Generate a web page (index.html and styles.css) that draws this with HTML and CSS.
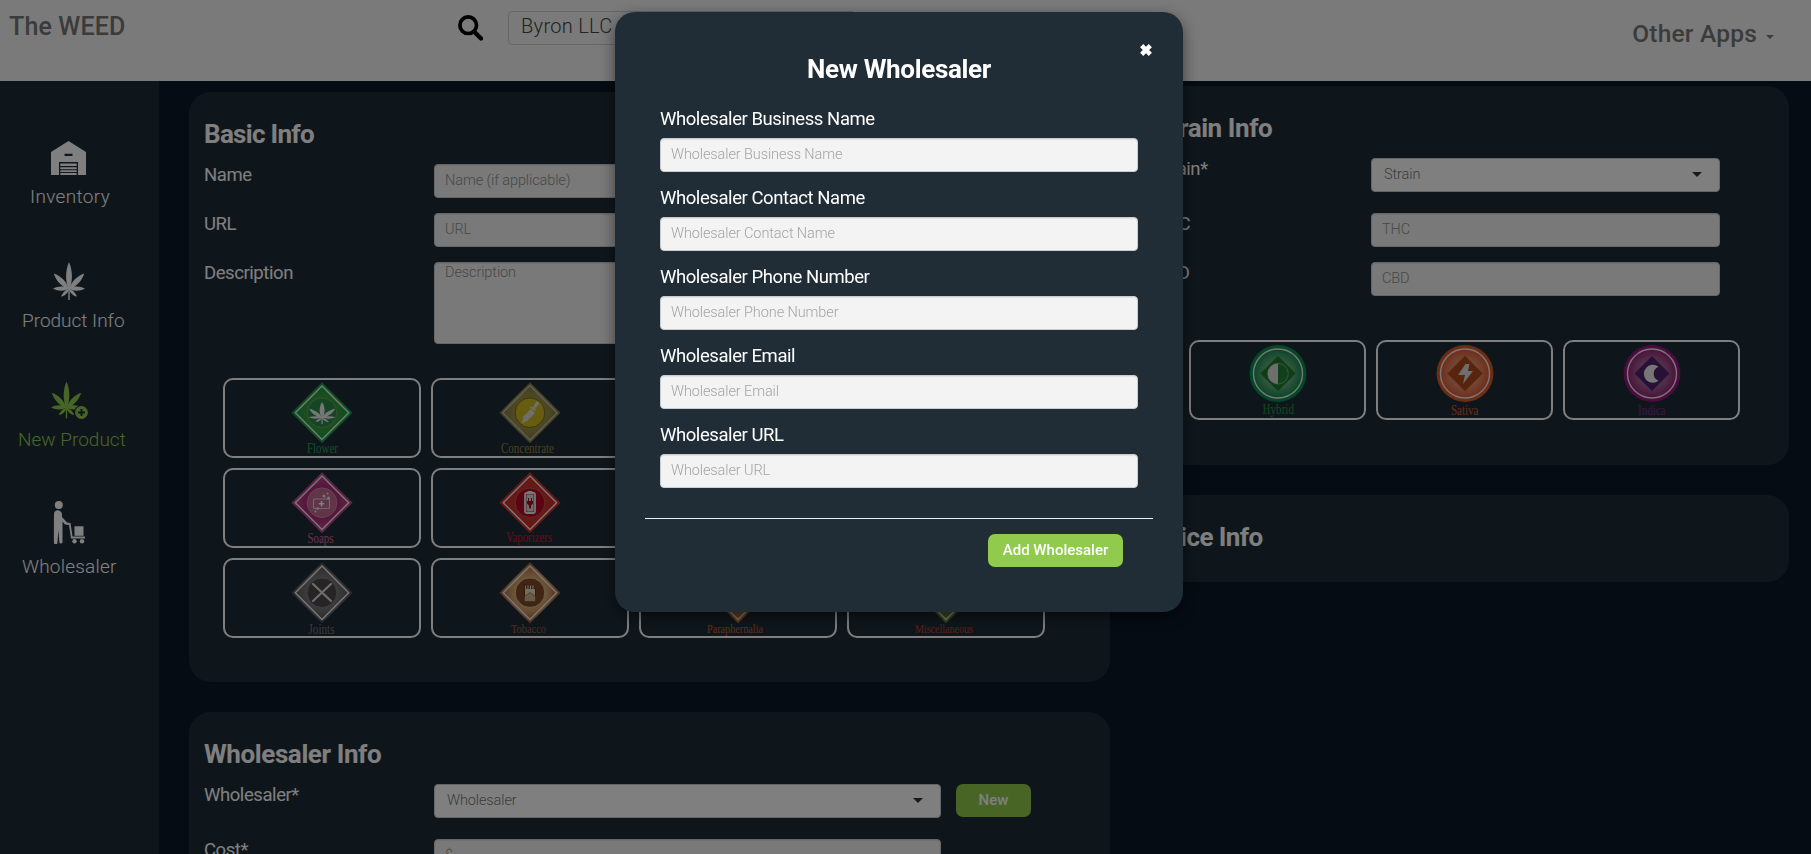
FILE: index.html
```html
<!DOCTYPE html>
<html lang="en">
<head>
<meta charset="utf-8">
<title>The WEED</title>
<link rel="stylesheet" href="styles.css">
</head>
<body>
<svg class="defs" width="0" height="0">
  <defs>
    <symbol id="leaf" viewBox="0 0 32 38">
      <path d="M16 28C12 20 12.300 8 16 0C19.700 8 20 20 16 28Z"/>
      <path d="M16 28C9 25 3 19 .8 11.600C8 14 14 20 16 28Z"/>
      <path d="M16 28C23 25 29 19 31.200 11.600C24 14 18 20 16 28Z"/>
      <path d="M16 26.500C11 23.500 5 24 0 26.500C5 29.500 12 29.500 16 26.500Z"/>
      <path d="M16 26.500C21 23.500 27 24 32 26.500C27 29.500 20 29.500 16 26.500Z"/>
      <path d="M16 27C12 28 9.500 31 8 34.500C12 34 15 31 16 27Z"/>
      <path d="M16 27C20 28 22.500 31 24 34.500C20 34 17 31 16 27Z"/>
      <path d="M15.300 26h1.400v12h-1.400z"/>
    </symbol>
    <radialGradient id="g-green"><stop offset=".3" stop-color="#4f9c30"/><stop offset="1" stop-color="#00a04c"/></radialGradient>
    <radialGradient id="g-olive"><stop offset=".3" stop-color="#a8a050"/><stop offset="1" stop-color="#82743a"/></radialGradient>
    <radialGradient id="g-pink"><stop offset=".3" stop-color="#a01c70"/><stop offset="1" stop-color="#c85090"/></radialGradient>
    <radialGradient id="g-red"><stop offset=".3" stop-color="#b84038"/><stop offset="1" stop-color="#e02420"/></radialGradient>
    <radialGradient id="g-gray"><stop offset=".2" stop-color="#909094"/><stop offset="1" stop-color="#505054"/></radialGradient>
    <radialGradient id="g-tan"><stop offset=".3" stop-color="#f0c88c"/><stop offset="1" stop-color="#a45c34"/></radialGradient>
    <radialGradient id="g-hybrid"><stop offset=".35" stop-color="#80b890"/><stop offset=".85" stop-color="#148c50"/><stop offset="1" stop-color="#00904c"/></radialGradient>
    <radialGradient id="g-sativa"><stop offset=".35" stop-color="#e8a080"/><stop offset=".85" stop-color="#e05c34"/><stop offset="1" stop-color="#e05820"/></radialGradient>
    <radialGradient id="g-indica"><stop offset=".35" stop-color="#a878a0"/><stop offset=".85" stop-color="#982478"/><stop offset="1" stop-color="#981080"/></radialGradient>
  </defs>
</svg>

<header class="topbar">
  <div class="brand">The WEED</div>
  <div class="search">
    <svg class="search-icon" viewBox="0 0 25 26"><circle cx="10.200" cy="10.200" r="8.300" fill="none" stroke="#000" stroke-width="3.700"/><path d="M16 16.500l7 7" stroke="#000" stroke-width="4.400" stroke-linecap="round"/></svg>
    <div class="search-box">Byron LLC</div>
  </div>
  <div class="apps"><span>Other Apps</span><i class="apps-caret"></i></div>
</header>

<div class="layout">
  <nav class="sidebar">
    <a class="nav-item nav-inventory">
      <svg width="35" height="34" viewBox="0 0 35 34"><path fill-rule="evenodd" d="M17.500 0L35 11V34H27V21H8V34H0V11ZM13.500 12.800V15h8v-2.200Z"/><path d="M9.300 22.500h16.400v2.600H9.300zM9.300 26.300h16.400v2H9.300zM9.300 29.300h16.400v1.600H9.300zM9.300 32h16.400v2H9.300z"/></svg>
      <span>Inventory</span>
    </a>
    <a class="nav-item nav-product">
      <svg width="32" height="38"><use href="#leaf"/></svg>
      <span>Product Info</span>
    </a>
    <a class="nav-item nav-new">
      <svg width="38" height="38" viewBox="0 0 38 38"><use href="#leaf" width="31" height="38"/><circle cx="30.500" cy="31.500" r="7.400" class="badge-ring"/><circle cx="30.500" cy="31.500" r="6.400"/><path d="M30.500 28v7M27 31.500h7" class="badge-plus"/></svg>
      <span>New Product</span>
    </a>
    <a class="nav-item nav-whole">
      <svg width="32" height="43" viewBox="0 0 32 43"><circle cx="5.800" cy="4" r="4"/><path d="M1 13c0-5 7-5 8 0v3l5 5.500 3.500.5 2 13.500H32v2H18L16 24l-4-.5-2.500-3V41.500a1.800 1.800 0 0 1-3.200 0L5.400 29 4.500 41.500a1.800 1.800 0 0 1-3.600 0V28Z"/><path d="M21.500 25.300h9v9.500h-9z"/><circle cx="21.500" cy="40.300" r="2.200"/><circle cx="29" cy="40.300" r="2.200"/></svg>
      <span>Wholesaler</span>
    </a>
  </nav>

  <main class="content">
    <div class="col col-left">
      <section class="panel basic">
        <h3 class="t-basic">Basic Info</h3>
        <div class="row"><label>Name</label><div class="field w-left">Name (if applicable)</div></div>
        <div class="row"><label>URL</label><div class="field w-left">URL</div></div>
        <div class="row row-area"><label>Description</label><div class="field area w-left">Description</div></div>
        <div class="tiles">
          <div class="tile"><svg viewBox="0 0 80 76"><path d="M40 2.200L70.500 32.700 40 63.200 9.500 32.700Z" fill="url(#g-green)"/><path d="M40 6L66.700 32.700 40 59.400 13.300 32.700Z" class="rim"/><circle cx="40" cy="32.700" r="14.800" fill="#2c8a48" stroke="#6aa070"/><use href="#leaf" width="32" height="38" transform="translate(26.500 22) scale(.85 .58)" fill="#eee"/><text x="25" y="73" textLength="31" lengthAdjust="spacingAndGlyphs" fill="#289a4c">Flower</text></svg></div>
          <div class="tile"><svg viewBox="0 0 80 76"><path d="M40 2.200L70.500 32.700 40 63.200 9.500 32.700Z" fill="url(#g-olive)"/><path d="M40 5.500L67.200 32.700 40 59.900 12.800 32.700Z" class="rim thin"/><circle cx="40" cy="32.700" r="14.800" fill="#cdbb20" stroke="#776b18"/><path d="M33.500 43c-2 1-2-2 0-3.500l-.5-2.500 8-8 4 4-8 8-2.500.5M40 27.500l1-1 2 1 3-5.500c2-1.500 4 1 2.500 3l-3.500 3 1 2-1 1Z" fill="#ddd"/><text x="11" y="73" textLength="53" lengthAdjust="spacingAndGlyphs" fill="#988232">Concentrate</text></svg></div>
          <div class="tile"></div>
          <div class="tile"></div>
          <div class="tile"><svg viewBox="0 0 80 76"><path d="M40 2.200L70.500 32.700 40 63.200 9.500 32.700Z" fill="url(#g-pink)"/><path d="M40 6L66.700 32.700 40 59.400 13.300 32.700Z" class="rim"/><circle cx="40" cy="32.700" r="14.800" fill="#c06a90" stroke="#d08aac"/><rect x="31.500" y="29" width="16" height="9.500" rx="1" fill="none" stroke="#eac8d8" stroke-width="1.200"/><path d="M39.500 31v5.500M36.800 33.700h5.500" stroke="#fff" stroke-width="1.500"/><g fill="#eee"><circle cx="42" cy="26" r="1.500"/><circle cx="45.500" cy="23.500" r="1"/><circle cx="46.500" cy="28" r="1.500"/><circle cx="35.500" cy="38.500" r="1.300"/><circle cx="33.500" cy="41.500" r="1"/></g><text x="25.500" y="73" textLength="26" lengthAdjust="spacingAndGlyphs" fill="#d0649c">Soaps</text></svg></div>
          <div class="tile"><svg viewBox="0 0 80 76"><path d="M40 2.200L70.500 32.700 40 63.200 9.500 32.700Z" fill="url(#g-red)"/><path d="M40 6L66.700 32.700 40 59.400 13.300 32.700Z" class="rim"/><circle cx="40" cy="32.700" r="14.800" fill="#b80824" stroke="#d05050"/><rect x="35" y="23" width="10" height="20" rx="1.500" fill="#a03040" stroke="#eee" stroke-width="1.800"/><path d="M37.500 22h5" stroke="#eee" stroke-width="2"/><rect x="36.500" y="24.500" width="7" height="17" fill="#ddd"/><path d="M37 31h6v2.500l-2 2v3h-2v-3l-2-2ZM38 28h1v3h-1zM41 28h1v3h-1z" fill="#a80820"/><text x="16" y="72.200" textLength="46" lengthAdjust="spacingAndGlyphs" fill="#cc1830">Vaporizers</text></svg></div>
          <div class="tile"></div>
          <div class="tile"></div>
          <div class="tile"><svg viewBox="0 0 80 76"><path d="M40 2.200L70.500 32.700 40 63.200 9.500 32.700Z" fill="url(#g-gray)"/><path d="M40 6L66.700 32.700 40 59.400 13.300 32.700Z" class="rim"/><circle cx="40" cy="32.700" r="14.800" fill="#4c4848" stroke="#807c7c"/><path d="M31 24l18 17M49 24L31 41" stroke="#ddd" stroke-width="2.200" stroke-linecap="round"/><text x="26.500" y="74" textLength="26" lengthAdjust="spacingAndGlyphs" fill="#74747a">Joints</text></svg></div>
          <div class="tile"><svg viewBox="0 0 80 76"><path d="M40 2.200L70.500 32.700 40 63.200 9.500 32.700Z" fill="url(#g-tan)"/><path d="M40 6L66.700 32.700 40 59.400 13.300 32.700Z" class="rim"/><circle cx="40" cy="32.700" r="14.800" fill="#834a28" stroke="#d8c090"/><path d="M34.500 24.500l2 1v3h9v13h-11Z" fill="#e8dcb0" stroke="#603818"/><path d="M34.500 36.500l5.500-4 5.500 4v5h-11Z" fill="#c8b890" stroke="#805030" stroke-width=".6"/><path d="M38 25.500v5M40.500 25.500v5M43 25.500v5" stroke="#eee"/><text x="21" y="73.300" textLength="35" lengthAdjust="spacingAndGlyphs" class="small" fill="#986048">Tobacco</text></svg></div>
          <div class="tile"><svg viewBox="0 0 80 76"><path d="M40 2.200L70.500 32.700 40 63.200 9.500 32.700Z" fill="#c07030"/><path d="M40 6L66.700 32.700 40 59.400 13.300 32.700Z" class="rim"/><text x="9" y="72.500" textLength="56" lengthAdjust="spacingAndGlyphs" class="small" fill="#c85c28">Paraphernalia</text></svg></div>
          <div class="tile"><svg viewBox="0 0 80 76"><path d="M40 2.200L70.500 32.700 40 63.200 9.500 32.700Z" fill="#6c8a30"/><path d="M40 6L66.700 32.700 40 59.400 13.300 32.700Z" class="rim" fill="#a07830"/><text x="9" y="73.300" textLength="58" lengthAdjust="spacingAndGlyphs" class="small" fill="#b84030">Miscellaneous</text></svg></div>
        </div>
      </section>
      <section class="panel wholesale">
        <h3 class="t-whole">Wholesaler Info</h3>
        <div class="row row-select"><label>Wholesaler*</label><div class="field select w-left"><span>Wholesaler</span><i class="caret"></i></div><button class="btn btn-new">New</button></div>
        <div class="row"><label>Cost*</label><div class="field w-left">$</div></div>
      </section>
    </div>
    <div class="col col-right">
      <section class="panel strain">
        <h3 class="t-strain">Strain Info</h3>
        <div class="row row-select"><label>Strain*</label><div class="field select w-right"><span>Strain</span><i class="caret"></i></div></div>
        <div class="row"><label>THC</label><div class="field w-right">THC</div></div>
        <div class="row"><label>CBD</label><div class="field w-right">CBD</div></div>
        <div class="tiles strain-tiles">
          <div class="tile"><svg viewBox="0 0 80 76"><circle cx="40" cy="31.500" r="28.400" fill="url(#g-hybrid)"/><circle cx="40" cy="31.500" r="24.500" class="rim"/><path d="M40 13.500l18 18-18 18-18-18Z" fill="#1d7a30" stroke="#70a870" stroke-width=".6"/><circle cx="40" cy="31.700" r="10.300" fill="#218038" stroke="#90b890" stroke-width=".8"/><path d="M40 21.400a10.300 10.300 0 0 0 0 20.600Z" fill="#ddd"/><text x="24.500" y="72" textLength="31.500" lengthAdjust="spacingAndGlyphs" fill="#1f9444">Hybrid</text></svg></div>
          <div class="tile"><svg viewBox="0 0 80 76"><circle cx="40" cy="31.500" r="28.400" fill="url(#g-sativa)"/><circle cx="40" cy="31.500" r="24.500" class="rim"/><path d="M40 13.500l18 18-18 18-18-18Z" fill="#b04816" stroke="#d09070" stroke-width=".6"/><path d="M40.500 22h4l-1.500 7h5L38 42l2-9h-7Z" fill="#ddd"/><text x="26" y="73" textLength="27.500" lengthAdjust="spacingAndGlyphs" fill="#d45a2c">Sativa</text></svg></div>
          <div class="tile"><svg viewBox="0 0 80 76"><circle cx="40" cy="31.500" r="28.400" fill="url(#g-indica)"/><circle cx="40" cy="31.500" r="24.500" class="rim"/><path d="M40 13.500l18 18-18 18-18-18Z" fill="#50206c" stroke="#a080b0" stroke-width=".6"/><path d="M46.500 24.800A9 9 0 1 0 46.500 38.800A7.500 7.500 0 0 1 46.500 24.800Z" fill="#eee"/><text x="26" y="73" textLength="27.500" lengthAdjust="spacingAndGlyphs" fill="#7c2c94">Indica</text></svg></div>
        </div>
      </section>
      <section class="panel price">
        <h3 class="t-price">Price Info</h3>
      </section>
    </div>
  </main>
</div>

<div class="overlay">
  <div class="modal">
    <svg class="close" viewBox="0 0 12 12"><path d="M2.300 2.300l7.400 7.400M9.700 2.300L2.300 9.700" stroke="#fff" stroke-width="3.800"/></svg>
    <h3 class="modal-title">New Wholesaler</h3>
    <div class="form">
      <div class="group"><label>Wholesaler Business Name</label><div class="field">Wholesaler Business Name</div></div>
      <div class="group"><label>Wholesaler Contact Name</label><div class="field">Wholesaler Contact Name</div></div>
      <div class="group"><label>Wholesaler Phone Number</label><div class="field">Wholesaler Phone Number</div></div>
      <div class="group"><label>Wholesaler Email</label><div class="field">Wholesaler Email</div></div>
      <div class="group"><label>Wholesaler URL</label><div class="field">Wholesaler URL</div></div>
    </div>
    <div class="modal-footer"><button class="btn btn-add">Add Wholesaler</button></div>
  </div>
</div>
</body>
</html>
```

FILE: styles.css
```css
* { box-sizing: border-box; }
html, body { height: 100%; }
body {
  margin: 0;
  overflow: hidden;
  background: #0a1826;
  color: #fff;
  font-family: Roboto, "Liberation Sans", sans-serif;
  font-size: 18px;
}
.defs { position: absolute; }
h3 { margin: 0; font-size: 26px; font-weight: 700; line-height: 30px; white-space: nowrap; }
.t-basic { letter-spacing: -.7px; }
.t-whole { letter-spacing: -.4px; }
.t-strain { letter-spacing: -.42px; }
.t-price { letter-spacing: -.58px; }
label { display: block; font-size: 18.500px; line-height: 22px; letter-spacing: -.43px; white-space: nowrap; }

.topbar {
  display: flex;
  height: 81px;
  background: #f5f5f5;
  color: #777;
}
.brand { width: 458px; padding: 12px 0 0 9px; font-size: 25px; line-height: 30px; font-weight: 500; letter-spacing: .15px; }
.search { display: flex; flex: 1; gap: 25px; padding-top: 11px; }
.search-icon { width: 25px; height: 26px; margin-top: 4px; }
.search-box {
  width: 348px;
  height: 34px;
  padding: 0 12px;
  border: 1px solid #ccc;
  border-radius: 4px;
  color: #444;
  font-size: 20px;
  font-weight: 300;
  line-height: 29px;
  letter-spacing: .3px;
}
.apps { display: flex; gap: 9px; padding: 19px 37px 0 0; font-size: 24.500px; line-height: 30px; font-weight: 500; letter-spacing: .2px; }
.apps-caret { margin-top: 16px; height: 4px; border: 4px solid transparent; border-top-color: #777; border-bottom: 0; }

.layout { display: flex; height: 773px; overflow: hidden; }
.sidebar {
  display: flex;
  flex-direction: column;
  width: 159px;
  padding-top: 60px;
  background: #1f2d37;
}
.nav-item { display: flex; flex-direction: column; height: 121px; font-size: 19px; font-weight: 300; line-height: 22px; white-space: nowrap; fill: #fff; }
.nav-inventory { padding-left: 30px; letter-spacing: .35px; }
.nav-inventory svg { margin: 0 0 11px 21px; }
.nav-product { padding-left: 22px; height: 119px; }
.nav-product svg { margin: 0 0 10px 31px; }
.nav-new { padding-left: 18px; height: 120px; color: #8fca4c; fill: #8fca4c; }
.nav-new svg { margin: 0 0 10px 33px; }
.nav-whole { padding-left: 22px; letter-spacing: .2px; }
.nav-whole svg { margin: 0 0 12px 31px; }
.badge-ring { fill: #1f2d37; }
.badge-plus { stroke: #1f2d37; stroke-width: 2; }

.content { display: flex; gap: 30px; padding-left: 30px; }
.col { display: flex; flex-direction: column; gap: 30px; }
.col-left { width: 921px; padding-top: 11px; }
.col-right { width: 649px; padding-top: 5px; }
.panel { flex: none; background: #1f2d37; border-radius: 22px; padding: 27px 15px 0; }
.basic { height: 590px; }
.wholesale { height: 142px; border-radius: 22px 22px 0 0; overflow: hidden; }
.strain { height: 379px; }
.price { height: 87px; }

.row { display: flex; height: 49px; }
.row label { width: 230px; }
.col-right .row label { width: 216px; }
h3 + .row { margin-top: 15px; }
.row-select { height: 55px; }
.row-area { height: 82px; }
.field {
  height: 34px;
  padding: 0 10px;
  border: 1px solid #ccc;
  border-radius: 4px;
  background: #f3f3f3;
  box-shadow: inset 0 1px 1px rgba(0, 0, 0, .075);
  color: #a4a4a4;
  font-size: 14.500px;
  font-weight: 300;
  line-height: 31px;
  letter-spacing: -.1px;
  white-space: nowrap;
}
.row .field { color: #909090; padding: 0 10px; }
.w-left { width: 507px; }
.w-right { width: 349px; }
.row .area { height: 82px; line-height: 20px; }
.row .select { display: flex; justify-content: space-between; background: #fff; color: #777; padding: 0 17px 0 12px; box-shadow: none; }
.caret { margin-top: 13px; height: 5px; border: 5px solid transparent; border-top-color: #333; border-bottom: 0; }

.tiles { display: grid; grid-template-columns: repeat(4, 198px); grid-auto-rows: 80px; gap: 10px 10px; margin: 34px 0 0 19px; }
.strain-tiles { grid-template-columns: repeat(3, 177px); margin: 29px 0 0 34px; }
.tile { border: 2px solid #fff; border-radius: 10px; }
.tile svg { display: block; width: 80px; height: 76px; margin: 0 auto; overflow: visible; }
.tile text { font-family: "Liberation Serif", serif; font-size: 14.500px; }
.tile .small { font-size: 13px; }
.rim { fill: none; stroke: #eee; stroke-width: 1.400; }
.thin { stroke: #bbb; }

.btn {
  border: 0;
  border-radius: 7px;
  background: #90cb4d;
  color: #fff;
  height: 33px;
  padding: 0 0 2px;
  font-family: inherit;
  font-size: 15px;
  font-weight: 500;
}
.btn-new { width: 75px; margin-left: 15px; }
.btn-add { width: 135px; }

.overlay {
  position: fixed;
  inset: 0;
  display: flex;
  justify-content: center;
  align-items: flex-start;
  padding: 12px 13px 0 0;
  background: rgba(0, 0, 0, .5);
}
.modal {
  position: relative;
  width: 568px;
  height: 600px;
  padding: 42px 30px 0;
  border-radius: 20px;
  background: #202d37;
  box-shadow: 0 5px 15px rgba(0, 0, 0, .5);
}
.close { position: absolute; top: 31px; right: 30px; width: 14px; height: 14px; }
.modal-title { text-align: center; letter-spacing: -.33px; }
.form { display: flex; flex-direction: column; gap: 15px; padding: 24px 15px 30px; border-bottom: 1px solid #eee; }
.form label { margin-bottom: 8px; }
.modal-footer { display: flex; justify-content: flex-end; padding: 15px 30px 0 0; }
```
